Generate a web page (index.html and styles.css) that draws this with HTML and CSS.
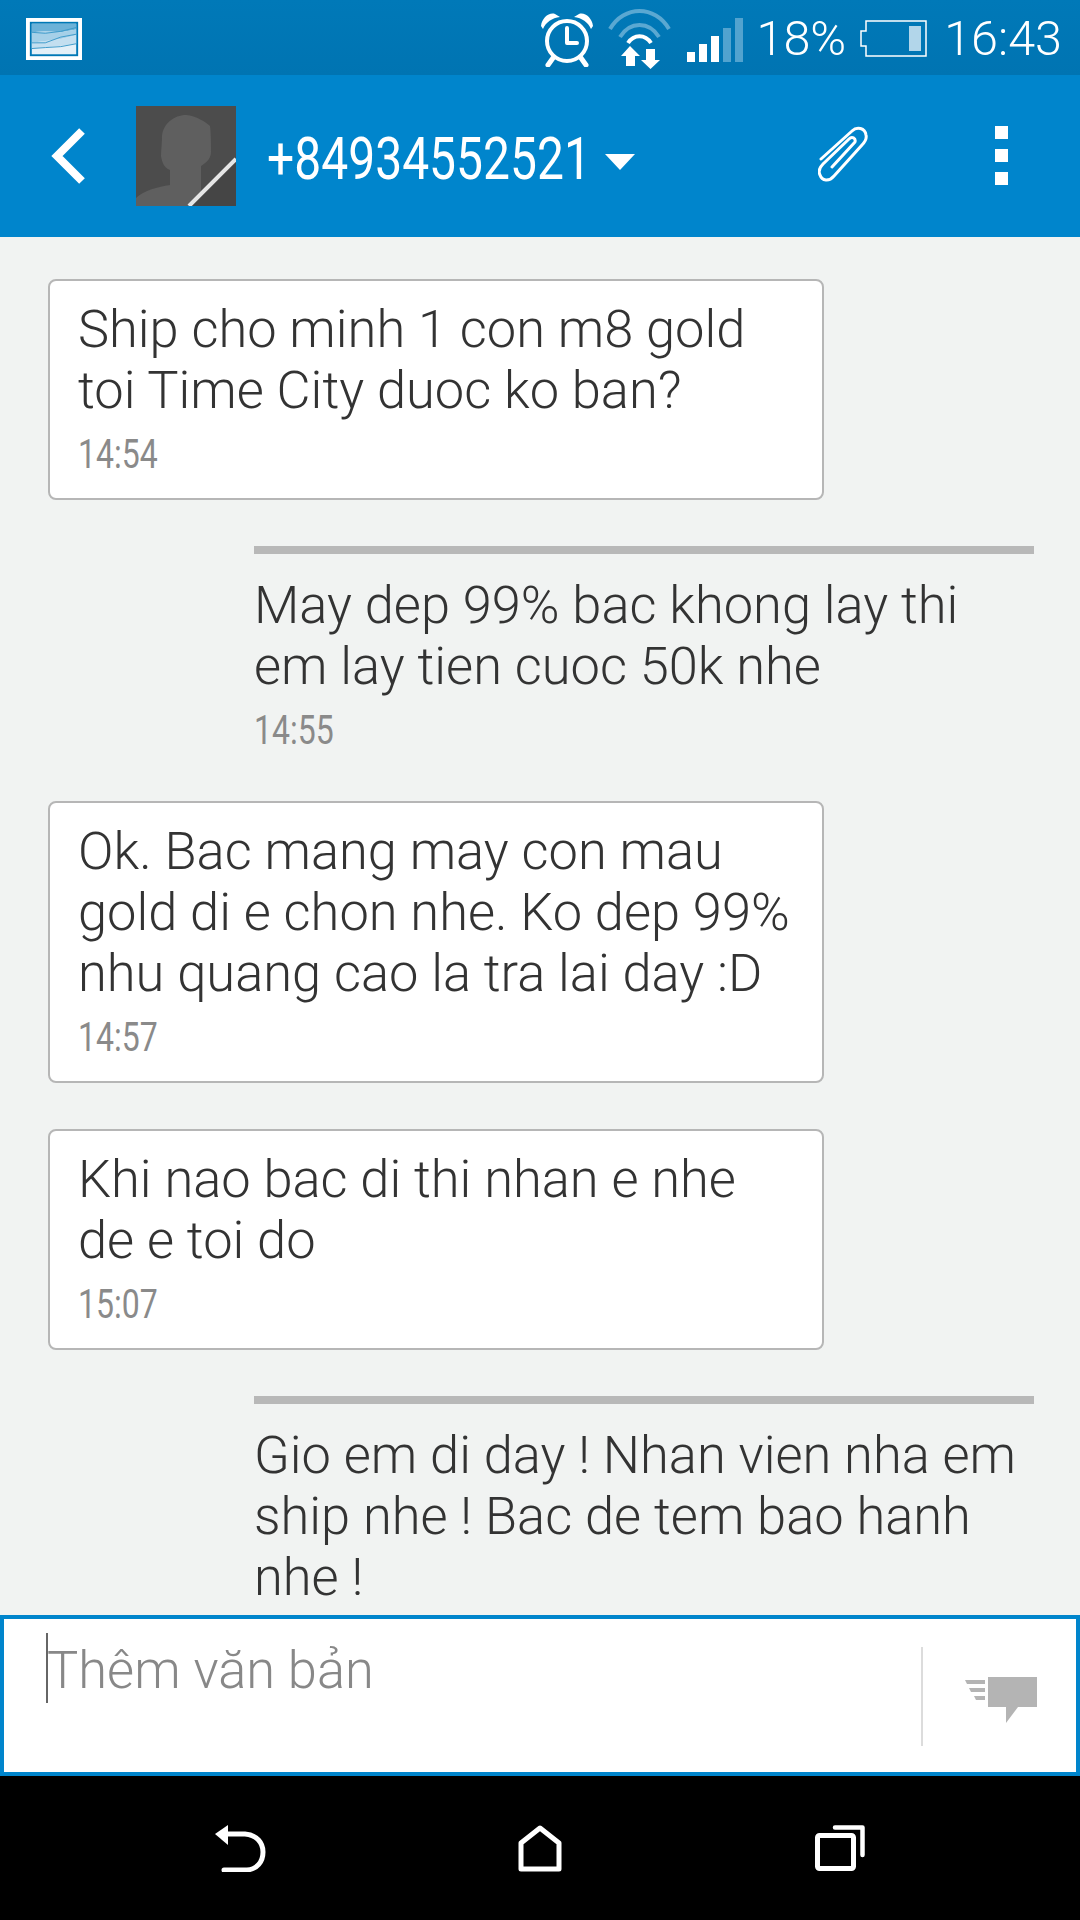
FILE: index.html
```html
<!DOCTYPE html>
<html lang="en">
<head>
    <meta charset="UTF-8">
    <meta name="viewport" content="width=device-width, initial-scale=1.0">
    <title>Messages</title>
    <link rel="stylesheet" href="styles.css">
</head>
<body>
    <div class="phone">
        <div class="status-bar">
            <svg class="notif-icon" width="56" height="42" viewBox="0 0 58 44" preserveAspectRatio="none">
                <rect x="2" y="2" width="54" height="40" fill="#0078b6" stroke="#fff" stroke-width="4"/>
                <rect x="6" y="6" width="46" height="32" fill="#e3f0f8"/>
                <path d="M6 6H52V12L36 15L20 14L6 15Z" fill="#6cb2d8"/>
                <path d="M6 15L20 14L36 15L52 12V18L36 22L20 24L6 26Z" fill="#a5d0e8"/>
                <path d="M6 26L20 24L36 22L52 18V27L36 29L20 31L6 32Z" fill="#c3dff0"/>
                <path d="M6 15L20 16L36 14L52 10M6 26L20 26L36 20L52 17M6 32L20 31L36 30L52 27" fill="none" stroke="#3c9aca" stroke-width="1"/>
            </svg>
            <div class="status-right">
                <svg class="alarm-icon" width="54" height="56" viewBox="0 0 54 56">
                    <circle cx="27" cy="30" r="20" fill="none" stroke="#fff" stroke-width="4"/>
                    <path d="M27 17V32H37" fill="none" stroke="#fff" stroke-width="4" stroke-linecap="round" stroke-linejoin="round"/>
                    <path d="M1 15C2 7 9 1 15 3L20 6C12 7 6 11 3 18Z" fill="#fff"/>
                    <path d="M53 15C52 7 45 1 39 3L34 6C42 7 48 11 51 18Z" fill="#fff"/>
                    <path d="M13 47L8 54M41 47L46 54" stroke="#fff" stroke-width="5" stroke-linecap="round"/>
                </svg>
                <svg class="wifi-icon" width="63" height="60" viewBox="0 0 63 60">
                    <path d="M2 20C16 -4 47 -4 61 20M12 28C22 12 41 12 51 28" fill="none" stroke="#5aa8d2" stroke-width="4"/>
                    <path d="M20 34C26 25 37 25 43 34" fill="none" stroke="#fff" stroke-width="4"/>
                    <path d="M22 37L13 47H18V57H27V47H32Z" fill="#fff"/>
                    <path d="M38 40H47V51H52L42.5 60L33 51H38Z" fill="#fff"/>
                </svg>
                <div class="signal">
                    <span class="bar bar-1"></span>
                    <span class="bar bar-2"></span>
                    <span class="bar bar-3"></span>
                    <span class="bar bar-4 dim"></span>
                    <span class="bar bar-5 dim"></span>
                </div>
                <span class="battery-pct">18%</span>
                <svg class="battery-icon" width="67" height="37" viewBox="0 0 67 37">
                    <path d="M6 1H66V36H6V26H1V11H6Z" fill="none" stroke="#fff" stroke-width="1.5"/>
                    <rect x="49" y="6" width="12" height="25" fill="#b2d6ea"/>
                </svg>
                <span class="clock">16:43</span>
            </div>
        </div>

        <div class="app-bar">
            <svg class="back-icon" width="38" height="58" viewBox="0 0 38 58">
                <path d="M33 4L8 29L33 54" fill="none" stroke="#fff" stroke-width="8"/>
            </svg>
            <svg class="avatar" width="100" height="100" viewBox="0 0 100 100">
                <rect width="100" height="100" fill="#4c4c4c"/>
                <path d="M0 100V92C8 84 22 81 34 79V64C28 62 26 56 25 50C25 44 26 38 26 30C27 18 38 9 50 9C60 10 70 16 74 20C75 28 75 40 75 46C75 54 68 58 65 60V90L55 100Z" fill="#5f5f5f"/>
                <path d="M53 100L100 53V100Z" fill="#454545"/>
                <path d="M53 100L100 53" stroke="#e6e6e6" stroke-width="4"/>
            </svg>
            <div class="contact">
                <span class="contact-name">+84934552521</span>
                <span class="caret"></span>
            </div>
            <svg class="clip-icon" width="50" height="58" viewBox="0 0 50 58">
                <path d="M3 33L34 5C39 0 47 2 48 9C49 13 47 16 44 19L16 50C11 56 4 55 2 49C0 45 2 41 5 38L31 13C34 10 38 12 37 16L14 41" fill="none" stroke="#fff" stroke-width="3" stroke-linecap="round" stroke-linejoin="round"/>
            </svg>
            <div class="overflow-menu">
                <span class="dot"></span>
                <span class="dot"></span>
                <span class="dot"></span>
            </div>
        </div>

        <div class="thread">
            <div class="msg in">
                <p class="msg-text">Ship cho minh 1 con m8 gold<br>toi Time City duoc ko ban?</p>
                <span class="msg-time">14:54</span>
            </div>
            <div class="msg out">
                <p class="msg-text">May dep 99% bac khong lay thi<br>em lay tien cuoc 50k nhe</p>
                <span class="msg-time">14:55</span>
            </div>
            <div class="msg in">
                <p class="msg-text">Ok. Bac mang may con mau<br>gold di e chon nhe. Ko dep 99%<br>nhu quang cao la tra lai day :D</p>
                <span class="msg-time">14:57</span>
            </div>
            <div class="msg in">
                <p class="msg-text">Khi nao bac di thi nhan e nhe<br>de e toi do</p>
                <span class="msg-time">15:07</span>
            </div>
            <div class="msg out">
                <p class="msg-text">Gio em di day ! Nhan vien nha em<br>ship nhe ! Bac de tem bao hanh<br>nhe !</p>
            </div>
        </div>

        <div class="composer">
            <div class="composer-input">
                <span class="cursor"></span>
                <span class="placeholder">Thêm văn bản</span>
            </div>
            <div class="send-btn">
                <svg width="73" height="46" viewBox="0 0 73 46">
                    <path d="M1 3H21V7H3ZM5 11H21V15H7ZM10 19H21V23H12Z" fill="#b4b4b4"/>
                    <path d="M24 0H73V30H54L42 46V30H24Z" fill="#b4b4b4"/>
                </svg>
            </div>
        </div>

        <div class="nav-bar">
            <svg width="51" height="47" viewBox="0 0 51 47">
                <path d="M13 0V20L0 9Z" fill="#fff"/>
                <path d="M12 9H30C42 10 48 18 48 27C48 37 42 44 32 45H9" fill="none" stroke="#fff" stroke-width="5" stroke-linecap="round"/>
            </svg>
            <svg width="44" height="47" viewBox="0 0 44 47">
                <path d="M22 3L41 18V44H3V18Z" fill="none" stroke="#fff" stroke-width="5" stroke-linejoin="round"/>
            </svg>
            <svg width="50" height="46" viewBox="0 0 50 46">
                <rect x="2.5" y="10.5" width="36" height="33" rx="2" fill="none" stroke="#fff" stroke-width="5"/>
                <path d="M20 2.5H47.5V30" fill="none" stroke="#fff" stroke-width="4.5" stroke-linecap="round" stroke-linejoin="round"/>
            </svg>
        </div>
    </div>
</body>
</html>
```

FILE: styles.css
```css
body {
    margin: 0;
    font-family: Roboto, "Noto Sans", sans-serif;
    background: #f1f3f2;
}

.phone {
    width: 1080px;
    height: 1920px;
    display: flex;
    flex-direction: column;
    overflow: hidden;
}

.status-bar {
    height: 75px;
    flex: none;
    box-sizing: border-box;
    display: flex;
    align-items: center;
    justify-content: space-between;
    padding: 2px 18px 0 26px;
    background: linear-gradient(to bottom, #0079b8, #0074b2);
    color: #fff;
}

.status-right {
    display: flex;
    align-items: center;
}

.alarm-icon {
    margin-right: 14px;
}

.wifi-icon {
    margin-right: 16px;
}

.signal {
    display: flex;
    align-items: flex-end;
    gap: 4px;
    height: 44px;
    margin-right: 14px;
    margin-top: 3px;
}

.bar {
    width: 8px;
    background: #fff;
}

.bar.dim {
    background: #52a3cf;
}

.bar-1 { height: 10px; }
.bar-2 { height: 18px; }
.bar-3 { height: 26px; }
.bar-4 { height: 34px; }
.bar-5 { height: 44px; }

.battery-pct, .clock {
    font-size: 48.5px;
    font-weight: 300;
}

.battery-pct {
    margin-right: 14px;
}

.battery-icon {
    margin-right: 17px;
}

.app-bar {
    height: 162px;
    flex: none;
    display: flex;
    align-items: center;
    background: #0085cc;
    color: #fff;
}

.back-icon {
    margin-left: 49px;
    margin-right: 49px;
}

.avatar {
    margin-top: -1px;
}

.contact {
    display: flex;
    align-items: center;
    width: 370px;
    margin-left: 31px;
}

.contact-name {
    display: inline-block;
    font-size: 60px;
    margin-top: 4px;
    transform: scaleX(0.8);
    transform-origin: left center;
    width: 338px;
    white-space: nowrap;
}

.caret {
    width: 0;
    height: 0;
    border-left: 15px solid transparent;
    border-right: 15px solid transparent;
    border-top: 16px solid #fff;
    margin-top: 12px;
}

.clip-icon {
    margin-left: 181px;
    margin-top: -2px;
}

.overflow-menu {
    display: flex;
    flex-direction: column;
    gap: 10px;
    margin-left: 127px;
    margin-top: -2px;
}

.dot {
    width: 13px;
    height: 13px;
    background: #fff;
}

.thread {
    flex: 1;
    min-height: 0;
    overflow: hidden;
    padding: 42px 0 0 48px;
}

.msg {
    margin-bottom: 46px;
}

.msg-text {
    margin: 0;
    font-size: 52.4px;
    font-weight: 300;
    line-height: 61px;
    color: #333;
    white-space: nowrap;
}

.msg-time {
    display: block;
    margin-top: 13px;
    font-size: 40px;
    line-height: 42px;
    color: #8a8a8a;
    transform: scaleX(0.8);
    transform-origin: left center;
}

.msg.in {
    width: 776px;
    box-sizing: border-box;
    padding: 18px 28px 22px;
    background: #fff;
    border: 2px solid #b6b6b6;
    border-radius: 8px;
}

.msg.out {
    width: 780px;
    box-sizing: border-box;
    margin-left: 206px;
    padding-top: 21px;
    padding-bottom: 3px;
    border-top: 8px solid #b8b8b8;
}

.composer {
    height: 161px;
    flex: none;
    box-sizing: border-box;
    display: flex;
    background: #fff;
    border: 4px solid #0085cc;
}

.composer-input {
    flex: 1;
    display: flex;
    padding: 14px 0 0 42px;
}

.cursor {
    width: 2px;
    height: 70px;
    background: #666;
}

.placeholder {
    margin-left: -1px;
    font-size: 52.4px;
    font-weight: 300;
    line-height: 74px;
    color: #888;
}

.send-btn {
    width: 155px;
    margin: 28px 0 26px;
    border-left: 2px solid #dcdcdc;
    box-sizing: border-box;
    display: flex;
    padding: 30px 0 0 41px;
}

.nav-bar {
    height: 144px;
    flex: none;
    background: #000;
    display: grid;
    grid-template-columns: repeat(3, 300px);
    justify-content: center;
    justify-items: center;
    align-items: center;
}
```
